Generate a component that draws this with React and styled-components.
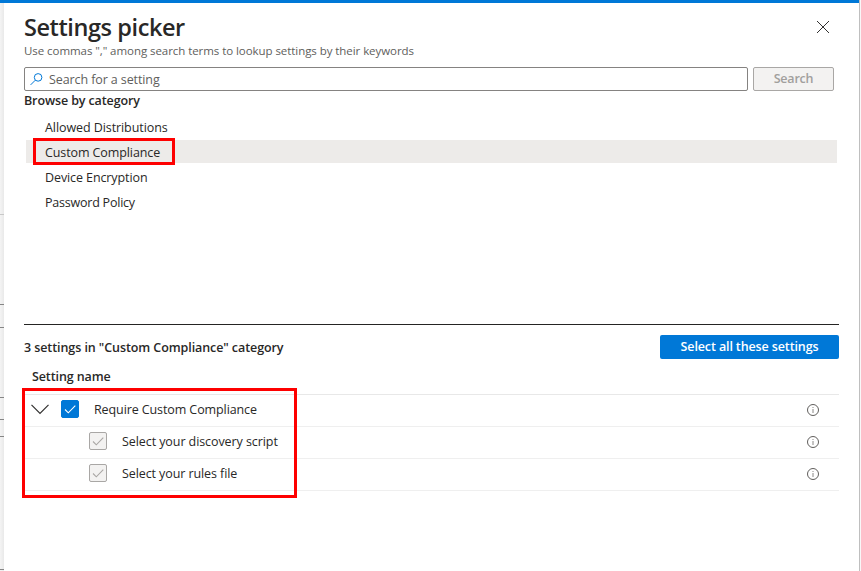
import React from "react";
import styled, { createGlobalStyle } from "styled-components";

const Global = createGlobalStyle`
  * { box-sizing: border-box; }
  body { margin: 0; background: #fff; overflow: hidden; }
  button, input { font: inherit; }
`;

const Frame = styled.div`
  width: 861px;
  height: 571px;
  display: grid;
  grid-template-columns: 4px 855px 2px;
  grid-template-rows: 3px 568px;
  font-family: "Open Sans", "Noto Sans", sans-serif;
  font-size: 12.5px;
  color: #292827;
  overflow: hidden;
`;

const TopBar = styled.div`
  grid-column: 1 / 3;
  background: #0078d7;
`;

const RightEdge = styled.div`
  grid-column: 3;
  grid-row: 1 / 3;
  border-left: 1px solid #bfbfbf;
  background: #f8f8f8;
`;

const Backdrop = styled.div`
  grid-column: 1;
  grid-row: 2;
  display: flex;
  flex-direction: column;
  background: linear-gradient(90deg, #f4f4f4, #e9e9e9);
`;

const Rule = styled.div`
  height: 1px;
  flex: none;
  margin-top: ${(p) => p.$gap}px;
  background: ${(p) => p.$color || "#858585"};
`;

const Panel = styled.main`
  grid-column: 2;
  grid-row: 2;
  background: #fff;
  padding: 9px 20px 0;
  display: flex;
  flex-direction: column;
`;

const Label = styled.span`
  white-space: nowrap;
  line-height: 18px;
  letter-spacing: ${(p) => p.$track || 0}px;
  font-weight: ${(p) => p.$weight || 400};
`;

const Header = styled.header`
  display: flex;
  justify-content: space-between;
  height: 30px;
`;

const Title = styled.h1`
  margin: 0;
  font-size: 23.5px;
  line-height: 30px;
  font-weight: 600;
  letter-spacing: -0.42px;
  white-space: nowrap;
`;

const CloseButton = styled.button`
  width: 14px;
  height: 14px;
  margin: 8px 9px 0 0;
  padding: 0;
  border: 0;
  background: none;
  svg { display: block; }
`;

const Subtitle = styled.p`
  margin: 0;
  height: 25px;
  font-size: 11.5px;
  line-height: 18px;
  color: #605e5c;
  white-space: nowrap;
  letter-spacing: -0.06px;
`;

const SearchRow = styled.div`
  display: flex;
  gap: 5px;
  height: 24px;
`;

const SearchField = styled.div`
  width: 724px;
  display: flex;
  align-items: center;
  gap: 6px;
  padding-left: 5px;
  border: 1px solid #858381;
  border-radius: 2px;
  color: #605e5c;
  ${Label} { padding-top: 2px; }
`;

const SearchButton = styled.button`
  width: 81px;
  padding: 0;
  border: 1px solid #a9a7a5;
  border-radius: 2px;
  background: #f3f2f1;
  color: #a19f9d;
  display: flex;
  justify-content: center;
  align-items: center;
`;

const SectionTitle = styled.div`
  height: 24px;
  padding-top: 1px;
  display: flex;
`;

const CategoryList = styled.ul`
  list-style: none;
  margin: 0 2px;
  padding: 0;
  height: 209px;
  display: flex;
  flex-direction: column;
  gap: 2px;
`;

const Category = styled.li`
  position: relative;
  height: 23px;
  flex: none;
  padding: 2px 0 0 19px;
  display: flex;
  align-items: center;
  background: ${(p) => (p.$selected ? "#edebe9" : "transparent")};
`;

const Results = styled.section`
  border-top: 1px solid #252423;
  padding-top: 10px;
`;

const ResultsHeader = styled.div`
  display: flex;
  justify-content: space-between;
  align-items: center;
  height: 24px;
  > ${Label} { padding-top: 2px; }
`;

const PrimaryButton = styled.button`
  width: 179px;
  height: 24px;
  padding: 0;
  border: 0;
  border-radius: 2px;
  background: #0078d7;
  color: #fff;
  display: flex;
  align-items: center;
  justify-content: center;
`;

const ColumnHeader = styled.div`
  height: 35px;
  padding: 9px 0 0 8px;
  display: flex;
`;

const Table = styled.div`
  position: relative;
  border-top: 1px solid #e8e8e8;
`;

const SettingRow = styled.div`
  height: 32px;
  display: flex;
  align-items: center;
  padding: 0 20px 2px ${(p) => (p.$nested ? 65 : 7)}px;
  border-bottom: 1px solid #efefef;
`;

const Chevron = styled.svg`
  width: 18px;
  height: 11px;
  margin-right: 12px;
  flex: none;
`;

const Checkbox = styled.span`
  width: 18px;
  height: 18px;
  flex: none;
  margin: 0 15px 1px 0;
  border-radius: 2px;
  border: 1px solid ${(p) => (p.$disabled ? "#a9a7a5" : "#0078d7")};
  background: ${(p) => (p.$disabled ? "#f3f2f1" : "#0078d7")};
  color: ${(p) => (p.$disabled ? "#a9a7a5" : "#fff")};
  svg { display: block; }
`;

const InfoIcon = styled.svg`
  width: 12px;
  height: 12px;
  margin: 1px 0 0 auto;
`;

const Highlight = styled.div`
  position: absolute;
  left: ${(p) => p.$x}px;
  top: ${(p) => p.$y}px;
  width: ${(p) => p.$w}px;
  height: ${(p) => p.$h}px;
  border: 3px solid #fe0000;
  pointer-events: none;
`;

const categories = [
  { name: "Allowed Distributions", track: -0.08 },
  { name: "Custom Compliance", track: -0.1, selected: true },
  { name: "Device Encryption", track: -0.1 },
  { name: "Password Policy", track: -0.22 },
];

const settings = [
  { name: "Require Custom Compliance", track: -0.1 },
  { name: "Select your discovery script", track: -0.08, nested: true },
  { name: "Select your rules file", track: -0.09, nested: true },
];

function Setting({ name, track, nested }) {
  return (
    <SettingRow $nested={nested}>
      {!nested && (
        <Chevron viewBox="0 0 18 11" fill="none" stroke="#323130" strokeWidth="1.2">
          <path d="M0.5 0.8 L9 9.3 L17.5 0.8" />
        </Chevron>
      )}
      <Checkbox $disabled={nested}>
        <svg width="16" height="16" viewBox="0 0 16 16" fill="none" stroke="currentColor" strokeWidth="1.1">
          <path d="M3 8.5 L6.3 11.8 L13.3 4.7" />
        </svg>
      </Checkbox>
      <Label $track={track}>{name}</Label>
      <InfoIcon viewBox="0 0 12 12" fill="none">
        <circle cx="6" cy="6" r="5.5" stroke="#605e5c" />
        <path d="M6 3V4M6 5V9" stroke="#8a8886" />
      </InfoIcon>
    </SettingRow>
  );
}

export default function App() {
  return (
    <Frame>
      <Global />
      <TopBar />
      <RightEdge />
      <Backdrop>
        <Rule $gap={211} $color="#c8c8c8" />
        <Rule $gap={89} />
        <Rule $gap={22} />
        <Rule $gap={69} />
        <Rule $gap={21} />
        <Rule $gap={16} />
        <Rule $gap={132} />
      </Backdrop>
      <Panel>
        <Header>
          <Title>Settings picker</Title>
          <CloseButton aria-label="Close">
            <svg width="14" height="14" viewBox="0 0 14 14" stroke="#323130" strokeWidth="1">
              <path d="M1 1 L13 13 M13 1 L1 13" />
            </svg>
          </CloseButton>
        </Header>
        <Subtitle>Use commas "," among search terms to lookup settings by their keywords</Subtitle>
        <SearchRow>
          <SearchField>
            <svg width="13" height="13" viewBox="0 0 13 13" fill="none" stroke="#0078d7" strokeWidth="1">
              <circle cx="8.1" cy="4.4" r="3.8" />
              <path d="M5.3 7.2 L0.6 11.9" />
            </svg>
            <Label $track={-0.1}>Search for a setting</Label>
          </SearchField>
          <SearchButton disabled>
            <Label $weight={600} $track={-0.2}>Search</Label>
          </SearchButton>
        </SearchRow>
        <SectionTitle>
          <Label $weight={600} $track={-0.12}>Browse by category</Label>
        </SectionTitle>
        <CategoryList>
          {categories.map((c) => (
            <Category key={c.name} $selected={c.selected}>
              <Label $track={c.track}>{c.name}</Label>
              {c.selected && <Highlight $x={7} $y={-2} $w={142} $h={27} />}
            </Category>
          ))}
        </CategoryList>
        <Results>
          <ResultsHeader>
            <Label $weight={600} $track={-0.08}>3 settings in "Custom Compliance" category</Label>
            <PrimaryButton>
              <Label $weight={600} $track={-0.12}>Select all these settings</Label>
            </PrimaryButton>
          </ResultsHeader>
          <ColumnHeader>
            <Label $weight={600} $track={-0.1}>Setting name</Label>
          </ColumnHeader>
          <Table>
            {settings.map((s) => (
              <Setting key={s.name} {...s} />
            ))}
            <Highlight $x={-2} $y={-7} $w={275} $h={110} />
          </Table>
        </Results>
      </Panel>
    </Frame>
  );
}
